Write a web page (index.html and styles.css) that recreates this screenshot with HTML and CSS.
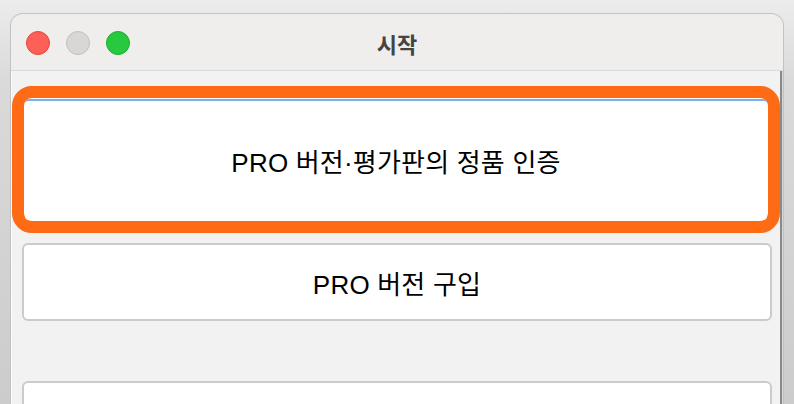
FILE: index.html
```html
<!DOCTYPE html>
<html lang="ko">
<head>
  <meta charset="UTF-8" />
  <meta name="viewport" content="width=device-width, initial-scale=1.0" />
  <title>시작</title>
  <link rel="stylesheet" href="styles.css">
</head>
<body>

  <div class="window">
    <div class="title-bar">
      <div class="lights">
        <span class="light close"></span>
        <span class="light min"></span>
        <span class="light max"></span>
      </div>
      <div class="title">시작</div>
      <div></div>
    </div>

    <div class="content">
      <div class="focus-ring">
        <button class="big-button focused">PRO 버전·평가판의 정품 인증</button>
      </div>
      <button class="big-button">PRO 버전 구입</button>
      <button class="big-button spaced"></button>
    </div>
  </div>

</body>
</html>
```

FILE: styles.css
```css
html, body {
  margin: 0;
  padding: 0;
  height: 100%;
  overflow: hidden;
}

body {
  background: linear-gradient(#ececec 0, #dadada 80px, #cccccc 404px);
  font-family: "Liberation Sans", "Noto Sans CJK KR", sans-serif;
}

.window {
  margin: 13px 10px 0 10px;
  height: 420px;
  border: 1px solid #c2c2c2;
  border-bottom: none;
  border-radius: 13px 13px 0 0;
  background: #d6d6d6;
  overflow: hidden;
  display: flex;
  flex-direction: column;
}

.title-bar {
  flex: 0 0 56px;
  height: 56px;
  background: #efeeec;
  border-bottom: 1px solid #d9d9d9;
  display: grid;
  grid-template-columns: 1fr auto 1fr;
  align-items: center;
}

.lights {
  display: flex;
  gap: 16px;
  padding-left: 15px;
  padding-top: 1px;
}

.light {
  width: 22px;
  height: 22px;
  border-radius: 50%;
  border: 1px solid;
}

.close {
  background: #fe5f57;
  border-color: #e2463f;
}

.min {
  background: #d8d7d6;
  border-color: #c1c0bf;
}

.max {
  background: #28c840;
  border-color: #1dad2b;
}

.title {
  font-family: "Noto Sans CJK KR", sans-serif;
  font-weight: bold;
  font-size: 22px;
  color: #444444;
  padding-top: 1px;
}

.content {
  flex: 1 0 auto;
  background: #f2f2f2;
  border-left: 1px solid #fbfbfb;
  border-right: 2px solid #8a8a8a;
  margin-right: 1px;
  padding-top: 15px;
  display: flex;
  flex-direction: column;
}

.focus-ring {
  flex: 0 0 auto;
  border: 12px solid #ff6b15;
  border-radius: 20px;
  padding: 1px;
  background: #ffffff;
  display: flex;
}

.big-button {
  display: block;
  margin: 10px 8px 0 10px;
  height: 78px;
  border: 2px solid #cbcbcb;
  border-radius: 6px;
  background: #ffffff;
  color: #000000;
  font-family: "Liberation Sans", "Noto Sans CJK KR", sans-serif;
  font-size: 26px;
  letter-spacing: 0.2px;
  padding: 0;
  flex: 0 0 auto;
}

.big-button.focused {
  flex: 1;
  margin: 0;
  height: 121px;
  border: none;
  border-top: 2px solid #80ade6;
  border-radius: 4px;
}

.big-button.spaced {
  margin-top: 60px;
}
```
